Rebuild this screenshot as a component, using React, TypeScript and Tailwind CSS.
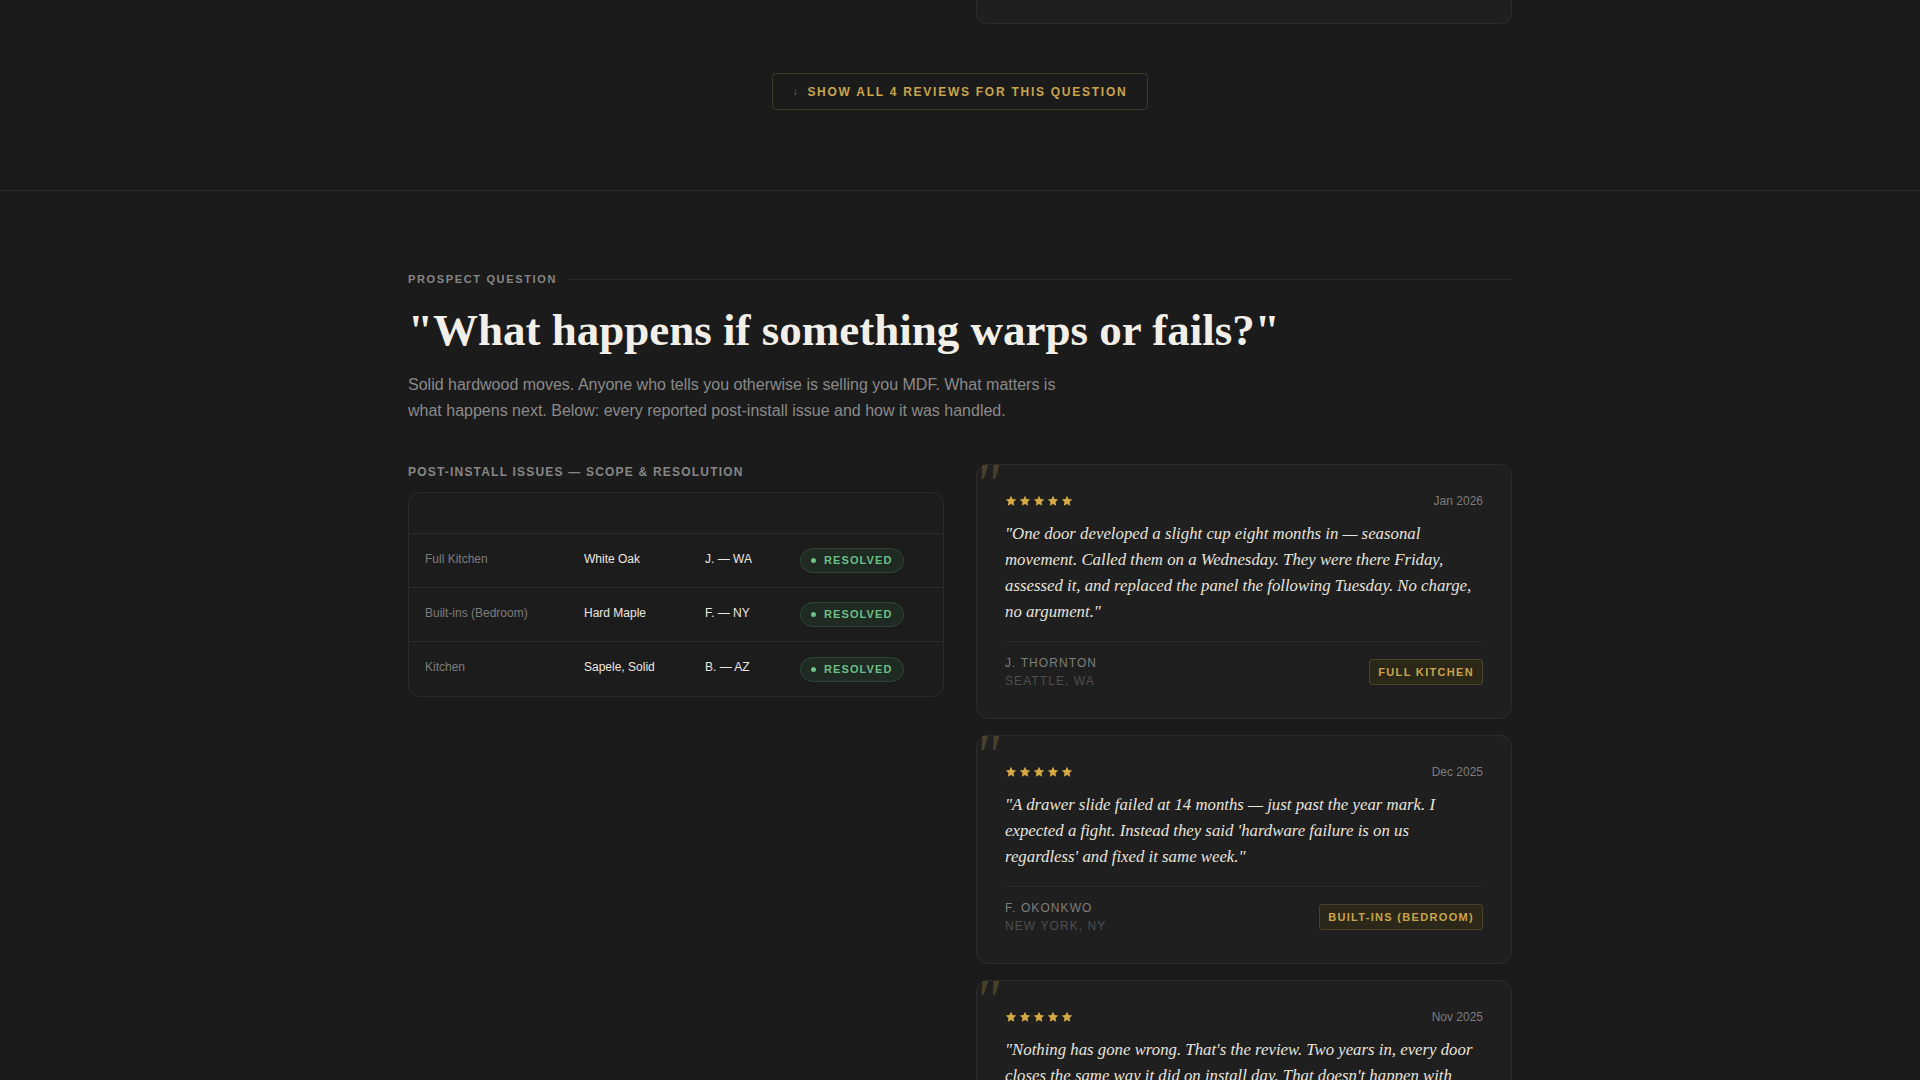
const sans = "font-['Liberation_Sans',Arial,sans-serif]";
const serif = "font-['Liberation_Serif','Times_New_Roman',serif]";

interface Issue {
  scope: string;
  wood: string;
  who: string;
}

const issues: Issue[] = [
  { scope: "Full Kitchen", wood: "White Oak", who: "J. — WA" },
  { scope: "Built-ins (Bedroom)", wood: "Hard Maple", who: "F. — NY" },
  { scope: "Kitchen", wood: "Sapele, Solid", who: "B. — AZ" },
];

interface Review {
  date: string;
  quote: string;
  name: string;
  place: string;
  tag: string;
}

const reviews: Review[] = [
  {
    date: "Jan 2026",
    quote:
      '"One door developed a slight cup eight months in — seasonal movement. Called them on a Wednesday. They were there Friday, assessed it, and replaced the panel the following Tuesday. No charge, no argument."',
    name: "J. Thornton",
    place: "Seattle, WA",
    tag: "Full Kitchen",
  },
  {
    date: "Dec 2025",
    quote:
      "\"A drawer slide failed at 14 months — just past the year mark. I expected a fight. Instead they said 'hardware failure is on us regardless' and fixed it same week.\"",
    name: "F. Okonkwo",
    place: "New York, NY",
    tag: "Built-ins (Bedroom)",
  },
  {
    date: "Nov 2025",
    quote:
      "\"Nothing has gone wrong. That's the review. Two years in, every door closes the same way it did on install day. That doesn't happen with cheap cabinets.\"",
    name: "B. Alvarez",
    place: "Phoenix, AZ",
    tag: "Kitchen",
  },
];

function Stars() {
  return (
    <div className="flex items-center gap-[2px]">
      {[0, 1, 2, 3, 4].map((i) => (
        <svg key={i} viewBox="0 0 24 24" className="size-[12px] fill-[#d4a843]">
          <polygon points="12,1.5 15.1,8.2 22.5,9 17,14.1 18.5,21.5 12,17.8 5.5,21.5 7,14.1 1.5,9 8.9,8.2" />
        </svg>
      ))}
    </div>
  );
}

function ReviewCard({ review }: { review: Review }) {
  return (
    <div className="relative rounded-xl border border-[#2c2c2c] bg-[#1f1f1f] p-7">
      <span
        className={`${serif} pointer-events-none absolute left-[-3px] top-[-11px] text-[60px] italic leading-none text-[#c9a44c]/25`}
      >
        "
      </span>
      <div className="mb-3 flex h-4 items-center justify-between">
        <Stars />
        <span className={`${sans} text-[12px] text-[#7c7c7c]`}>{review.date}</span>
      </div>
      <p className={`${serif} mb-4 text-[16.8px] italic leading-[26px] text-[#e8e4dc]`}>
        {review.quote}
      </p>
      <div className="flex items-center justify-between border-t border-[#2a2a2a] pt-3">
        <div className={`${sans} text-[12px] uppercase leading-[18px] tracking-[0.09em]`}>
          <div className="text-[#7e7e7e]">{review.name}</div>
          <div className="text-[#4e4e4e]">{review.place}</div>
        </div>
        <span
          className={`${sans} flex h-[26px] items-center rounded-[3px] border border-[#4a4128] bg-[#2b2819] px-2 text-[11px] font-bold uppercase tracking-[0.12em] text-[#c9a44c]`}
        >
          {review.tag}
        </span>
      </div>
    </div>
  );
}

export default function App() {
  return (
    <div className={`${sans} min-h-screen bg-[#1b1b1b] text-[#e8e4dc]`}>
      <section className="border-b border-[#2a2a2a] pb-20">
        <div className="mx-auto max-w-[1200px] px-12">
          <div className="grid grid-cols-2 gap-8">
            <div />
            <div className="h-6 rounded-b-xl border border-t-0 border-[#2c2c2c] bg-[#1f1f1f]" />
          </div>
          <div className="mt-[49px] flex justify-center">
            <button
              type="button"
              className="flex h-[37px] items-center gap-2 rounded-[4px] border border-[#3f3a28] px-5 text-[12px] font-bold uppercase tracking-[0.145em] text-[#c9a44c]"
            >
              <span className="text-[10px] text-[#8a7a45]">↓</span>
              Show all 4 reviews for this question
            </button>
          </div>
        </div>
      </section>

      <section className="pt-20">
        <div className="mx-auto max-w-[1200px] px-12">
          <div className="mb-4 flex h-4 items-center gap-3">
            <span className="text-[11px] font-bold uppercase tracking-[0.15em] text-[#868686]">
              Prospect question
            </span>
            <div className="h-px flex-1 bg-[#2a2a2a]" />
          </div>
          <h2 className={`${serif} text-[45px] font-bold leading-[55px] text-[#f2efe8]`}>
            "What happens if something warps or fails?"
          </h2>
          <p className="mt-3.5 max-w-[680px] text-[16px] leading-[26px] text-[#8a8a8a]">
            Solid hardwood moves. Anyone who tells you otherwise is selling you MDF. What matters
            is what happens next. Below: every reported post-install issue and how it was handled.
          </p>

          <div className="mt-10 grid grid-cols-2 items-start gap-8">
            <div>
              <h3 className="mb-3 text-[12px] font-bold uppercase leading-4 tracking-[0.1em] text-[#868686]">
                Post-install issues — scope &amp; resolution
              </h3>
              <div className="overflow-hidden rounded-xl border border-[#2a2a2a] bg-[#1c1c1c]">
                <div className="h-[41px] border-b border-[#2a2a2a]" />
                {issues.map((issue, i) => (
                  <div
                    key={issue.scope}
                    className={`grid h-[54px] grid-cols-[159px_121px_95px_1fr] items-center text-[12px] ${
                      i < issues.length - 1 ? "border-b border-[#2a2a2a]" : ""
                    }`}
                  >
                    <span className="mb-[4px] px-4 text-[#7c7c7c]">{issue.scope}</span>
                    <span className="mb-[4px] px-4 text-[#ece8e0]">{issue.wood}</span>
                    <span className="mb-[4px] px-4 text-[#ece8e0]">{issue.who}</span>
                    <span className="px-4">
                      <span className="inline-flex h-[25px] items-center gap-2 rounded-full border border-[#2f4636] bg-[#1f2a22] px-2.5 text-[11px] font-bold uppercase tracking-[0.1em] text-[#6cbf85]">
                        <span className="size-[5px] rounded-full bg-[#6cbf85]" />
                        Resolved
                      </span>
                    </span>
                  </div>
                ))}
              </div>
            </div>

            <div className="flex flex-col gap-4 pb-20">
              {reviews.map((r) => (
                <ReviewCard key={r.date} review={r} />
              ))}
            </div>
          </div>
        </div>
      </section>
    </div>
  );
}
